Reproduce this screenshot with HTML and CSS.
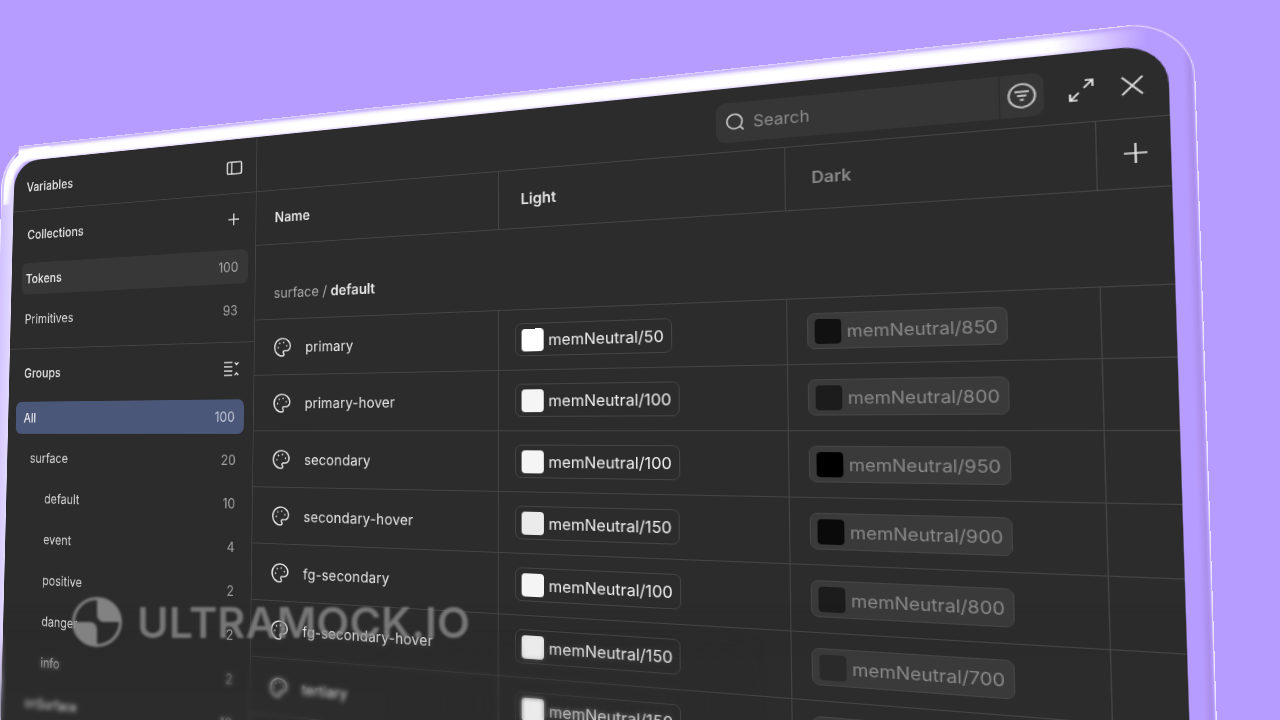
FILE: index.html
```html
<!DOCTYPE html>
<html lang="en">
<head>
    <meta charset="UTF-8">
    <title>Variables</title>
    <link rel="stylesheet" href="styles.css">
</head>
<body>
    <div class="frame">
        <div class="window">
            <aside class="sidebar">
                <div class="side-head">
                    <span class="side-title">Variables</span>
                    <svg class="icon" viewBox="0 0 24 24"><rect x="2.5" y="5" width="19" height="14" rx="2"/><path d="M8.5 5v14"/></svg>
                </div>
                <div class="side-section">
                    <div class="section-head">
                        <span class="side-title">Collections</span>
                        <svg class="icon" viewBox="0 0 24 24"><path d="M12 5v14M5 12h14"/></svg>
                    </div>
                    <div class="side-row hl"><b>Tokens</b><span class="count">100</span></div>
                    <div class="side-row"><span>Primitives</span><span class="count">93</span></div>
                </div>
                <div class="side-section groups">
                    <div class="section-head">
                        <span class="side-title">Groups</span>
                        <svg class="icon" viewBox="0 0 24 24"><path d="M3 5h11M3 10h11M3 15h11M3 20h11M17 5l2.5 2.5L22 5M17 20l2.5-2.5L22 20"/></svg>
                    </div>
                    <div class="side-row active"><span>All</span><span class="count">100</span></div>
                    <div class="side-row lv1"><span>surface</span><span class="count">20</span></div>
                    <div class="side-row lv2"><span>default</span><span class="count">10</span></div>
                    <div class="side-row lv2"><span>event</span><span class="count">4</span></div>
                    <div class="side-row lv2"><span>positive</span><span class="count">2</span></div>
                    <div class="side-row lv2"><span>danger</span><span class="count">2</span></div>
                    <div class="side-row lv2"><span>info</span><span class="count">2</span></div>
                    <div class="side-row lv1"><span>onSurface</span><span class="count">16</span></div>
                </div>
            </aside>
            <main class="main">
                <div class="toolbar">
                    <div class="search">
                        <div class="search-input">
                            <svg class="icon" viewBox="0 0 24 24"><circle cx="11" cy="11" r="8"/><path d="M17 17l3.5 3.5"/></svg>
                            <span>Search</span>
                        </div>
                        <div class="search-filter">
                            <svg class="icon" viewBox="0 0 24 24"><circle cx="12" cy="12" r="10"/><path d="M6.5 8.5h11M8.5 12h7M10.5 15.5h3"/></svg>
                        </div>
                    </div>
                    <svg class="icon tool" viewBox="0 0 24 24"><path d="M14 10l7-7M15 3h6v6M10 14l-7 7M3 15v6h6"/></svg>
                    <svg class="icon tool" viewBox="0 0 24 24"><path d="M4 4l16 16M20 4L4 20"/></svg>
                </div>
                <div class="table-row col-head">
                    <div class="cell"><b>Name</b></div>
                    <div class="cell"><b>Light</b></div>
                    <div class="cell dim"><b>Dark</b></div>
                    <div class="cell add"><svg class="icon" viewBox="0 0 24 24"><path d="M12 3v18M3 12h18"/></svg></div>
                </div>
                <div class="group-row"><span class="crumb">surface / </span><b>default</b></div>

                <div class="table-row">
                    <div class="cell name"><svg class="icon" viewBox="0 0 24 24"><use href="#palette"/></svg><span>primary</span></div>
                    <div class="cell"><span class="chip"><i class="swatch n50"></i>memNeutral/50</span></div>
                    <div class="cell"><span class="chip off"><i class="swatch n850"></i>memNeutral/850</span></div>
                    <div class="cell"></div>
                </div>
                <div class="table-row">
                    <div class="cell name"><svg class="icon" viewBox="0 0 24 24"><use href="#palette"/></svg><span>primary-hover</span></div>
                    <div class="cell"><span class="chip"><i class="swatch n100"></i>memNeutral/100</span></div>
                    <div class="cell"><span class="chip off"><i class="swatch n800"></i>memNeutral/800</span></div>
                    <div class="cell"></div>
                </div>
                <div class="table-row">
                    <div class="cell name"><svg class="icon" viewBox="0 0 24 24"><use href="#palette"/></svg><span>secondary</span></div>
                    <div class="cell"><span class="chip"><i class="swatch n100"></i>memNeutral/100</span></div>
                    <div class="cell"><span class="chip off"><i class="swatch n950"></i>memNeutral/950</span></div>
                    <div class="cell"></div>
                </div>
                <div class="table-row">
                    <div class="cell name"><svg class="icon" viewBox="0 0 24 24"><use href="#palette"/></svg><span>secondary-hover</span></div>
                    <div class="cell"><span class="chip"><i class="swatch n150"></i>memNeutral/150</span></div>
                    <div class="cell"><span class="chip off"><i class="swatch n900"></i>memNeutral/900</span></div>
                    <div class="cell"></div>
                </div>
                <div class="table-row">
                    <div class="cell name"><svg class="icon" viewBox="0 0 24 24"><use href="#palette"/></svg><span>fg-secondary</span></div>
                    <div class="cell"><span class="chip"><i class="swatch n100"></i>memNeutral/100</span></div>
                    <div class="cell"><span class="chip off"><i class="swatch n800"></i>memNeutral/800</span></div>
                    <div class="cell"></div>
                </div>
                <div class="table-row">
                    <div class="cell name"><svg class="icon" viewBox="0 0 24 24"><use href="#palette"/></svg><span>fg-secondary-hover</span></div>
                    <div class="cell"><span class="chip"><i class="swatch n150"></i>memNeutral/150</span></div>
                    <div class="cell"><span class="chip off"><i class="swatch n700"></i>memNeutral/700</span></div>
                    <div class="cell"></div>
                </div>
                <div class="table-row">
                    <div class="cell name"><svg class="icon" viewBox="0 0 24 24"><use href="#palette"/></svg><span>tertiary</span></div>
                    <div class="cell"><span class="chip"><i class="swatch n150"></i>memNeutral/150</span></div>
                    <div class="cell"><span class="chip off"><i class="swatch n800"></i>memNeutral/800</span></div>
                    <div class="cell"></div>
                </div>
            </main>
        </div>
    </div>

    <div class="blur blur-soft"></div>
    <div class="blur blur-hard"></div>

    <div class="watermark">
        <svg class="mark" viewBox="0 0 48 48">
            <circle cx="24" cy="24" r="22.5"/>
            <path class="fill" d="M24 2a22 22 0 0 1 22 22H31c-4 0-7-3-7-7zM24 46A22 22 0 0 1 2 24h15c4 0 7 3 7 7z"/>
        </svg>
        <span>ULTRAMOCK.IO</span>
    </div>

    <svg class="defs" width="0" height="0">
        <symbol id="palette" viewBox="0 0 24 24">
            <path d="M12 22a1 1 0 0 1 0-20 10 9 0 0 1 10 9 5 5 0 0 1-5 5h-2.25a1.75 1.75 0 0 0-1.4 2.8l.3.4a1.75 1.75 0 0 1-1.4 2.8z"/>
            <circle class="dot" cx="13.5" cy="6.5" r=".9"/>
            <circle class="dot" cx="17.5" cy="10.5" r=".9"/>
            <circle class="dot" cx="6.5" cy="12.5" r=".9"/>
            <circle class="dot" cx="8.5" cy="7.5" r=".9"/>
        </symbol>
    </svg>
</body>
</html>
```

FILE: styles.css
```css
html, body { margin: 0; height: 100%; overflow: hidden; }
body { background: #b79cff; font-family: Inter, "Liberation Sans", sans-serif; font-size: 16px; color: #e6e6e6; }
b { font-weight: 600; }
i { display: block; }

/* the whole app sits on a tilted plane */
.frame { position: relative; width: 1301px; height: 860px; padding: 20px; box-sizing: border-box;
         border-radius: 52px; transform-origin: 0 0;
         transform: matrix3d(.69356,-.115,0,-.00026629, -.021564,.84453,0,-.000041675, 0,0,1,0, 2.55,163.4,0,1.10466);
         box-shadow: inset 0 0 0 1px rgba(255,255,255,.7);
         background:
             linear-gradient(to right, #d0bfff, #e2d9ff) left / 20px 100% no-repeat,
             linear-gradient(to left, transparent 2px, #a88de8 3px, #b79cff 9px) right / 20px 100% no-repeat; }
.frame::before { content: ""; position: absolute; top: 0; left: 26px; right: 36px; height: 21px;
                 background: linear-gradient(to bottom, #e4dbff 0, #c4aeff 2px, #efe9ff 5px, #fff 8px, #fff 17px, #d9c9ff 21px);
                 -webkit-mask-image: linear-gradient(to right, #000 94%, transparent);
                 mask-image: linear-gradient(to right, #000 94%, transparent); }
.frame::after { content: ""; position: absolute; top: 4px; left: 4px; width: 70px; height: 70px;
                border-radius: 48px 0 0 0; box-shadow: inset 12px 12px 5px -3px #fff;
                -webkit-mask-image: linear-gradient(135deg, #000 45%, transparent 70%);
                mask-image: linear-gradient(135deg, #000 45%, transparent 70%); }

.window { position: relative; z-index: 1; display: flex; width: 1261px; height: 820px; background: #2c2c2c;
          border-radius: 36px 36px 0 0; overflow: hidden; }

.icon { width: 24px; height: 24px; fill: none; stroke: #e6e6e6; stroke-width: 1.7; flex: none; }
.dot { fill: #e6e6e6; stroke: none; }
.defs { position: absolute; }

/* sidebar */
.sidebar { width: 350px; flex: none; box-sizing: border-box; border-right: 1px solid #454545; }
.side-head { height: 65px; box-sizing: border-box; display: flex; align-items: center; justify-content: space-between;
             padding: 4px 17px 0 20px; border-bottom: 1px solid #454545; }
.side-title { font-weight: 500; }
.side-section { padding: 0 12px 6px; border-bottom: 1px solid #454545; }
.section-head { height: 60px; display: flex; align-items: center; justify-content: space-between;
                padding: 0 5px 0 11px; margin-bottom: 6px; }
.side-row { height: 40px; margin-bottom: 11px; display: flex; align-items: center; justify-content: space-between;
            padding: 0 10px 0 10px; border-radius: 8px; color: #dadada; }
.side-row b { font-weight: 500; color: #eee; }
.count { color: #a3a3a3; }
.hl { background: #373737; margin-left: 4px; margin-right: -3px; padding: 0 13px 0 6px; }
.groups { border-bottom: 0; padding-bottom: 0; }
.groups .section-head { height: 59px; margin-bottom: 7px; padding-right: 6px; }
.groups .side-row { margin-bottom: 10px; }
.groups .active { background: #4b5779; color: #fff; padding: 0 12px; }
.active .count { color: #c3c8d6; }
.groups .lv1 { padding-left: 23px; }
.groups .lv2 { padding-left: 46px; }

/* toolbar */
.main { flex: 1; min-width: 0; }
.toolbar { height: 64px; display: flex; align-items: center; justify-content: flex-end; padding: 6px 16px 0 0; box-sizing: border-box; }
.search { width: 292px; height: 40px; display: flex; margin-right: 18px; border-radius: 9px; background: #363636; overflow: hidden; }
.search-input { flex: 1; display: flex; align-items: center; gap: 6px; padding-left: 8px; color: #8d8d8d; font-size: 16px; }
.search-input .icon { width: 22px; height: 22px; stroke: #cfcfcf; }
.search-filter { width: 36px; display: flex; align-items: center; justify-content: center; border-left: 1px solid #2c2c2c; }
.search-filter .icon { width: 26px; height: 26px; stroke: #bdbdbd; }
.tool { margin-left: 16px; }
.search + .tool { margin-left: 0; }

/* table */
.table-row { display: grid; grid-template-columns: 294px 293px 267px 57px; height: 64px; box-sizing: border-box; border-bottom: 1px solid #454545; }
.col-head { border-top: 1px solid #454545; }
.cell { display: flex; align-items: center; padding-left: 18px; border-right: 1px solid #454545; box-sizing: border-box; min-width: 0; white-space: nowrap; }
.cell:last-child { border-right: 0; }
.col-head .cell { padding-left: 24px; }
.col-head .dim { color: #8a8a8a; }
.col-head .add { padding: 0 0 0 3px; justify-content: center; }
.group-row { height: 87px; box-sizing: border-box; padding: 44px 0 0 24px; line-height: 24px; border-bottom: 1px solid #454545; }
.crumb { color: #a8a8a8; }
.cell.name { padding-left: 24px; gap: 17px; letter-spacing: .2px; }
.chip { display: flex; align-items: center; gap: 5px; height: 35px; padding: 0 7px 0 6px; box-sizing: border-box;
        border: 1px solid #464646; border-radius: 7px; font-size: 16.25px; color: #f0f0f0; }
.chip.off { background: #3a3a3a; color: #8a8a8a; }
.swatch { width: 24px; height: 24px; border-radius: 4px; }
.n50 { background: #fff; }
.n100 { background: #f5f5f5; }
.n150 { background: #ebebeb; }
.n700 { background: #2a2a2a; }
.n800 { background: #1c1c1c; }
.n850 { background: #111; }
.n900 { background: #0a0a0a; }
.n950 { background: #000; }

/* depth of field towards the bottom of the picture, stronger on the far left */
.blur { position: absolute; left: 0; right: 0; bottom: 0; }
.blur-soft { height: 115px; backdrop-filter: blur(.7px);
             -webkit-mask-image: linear-gradient(to bottom, transparent, #000 45%);
             mask-image: linear-gradient(to bottom, transparent, #000 45%); }
.blur-hard { height: 90px; backdrop-filter: blur(2px);
             -webkit-mask-image: linear-gradient(to bottom, transparent, #000 70%), linear-gradient(to right, #000 30%, transparent 60%);
             -webkit-mask-composite: source-in;
             mask-image: linear-gradient(to bottom, transparent, #000 70%), linear-gradient(to right, #000 30%, transparent 60%);
             mask-composite: intersect; }

.watermark { position: absolute; left: 72px; top: 597px; display: flex; align-items: center; gap: 15px;
             color: rgba(135,135,135,.82); font-size: 43px; font-weight: 600; line-height: 50px; filter: blur(1px); }
.mark { width: 50px; height: 50px; fill: none; stroke: rgba(135,135,135,.9); stroke-width: 3; }
.mark .fill { fill: rgba(135,135,135,.95); stroke: none; }
```
